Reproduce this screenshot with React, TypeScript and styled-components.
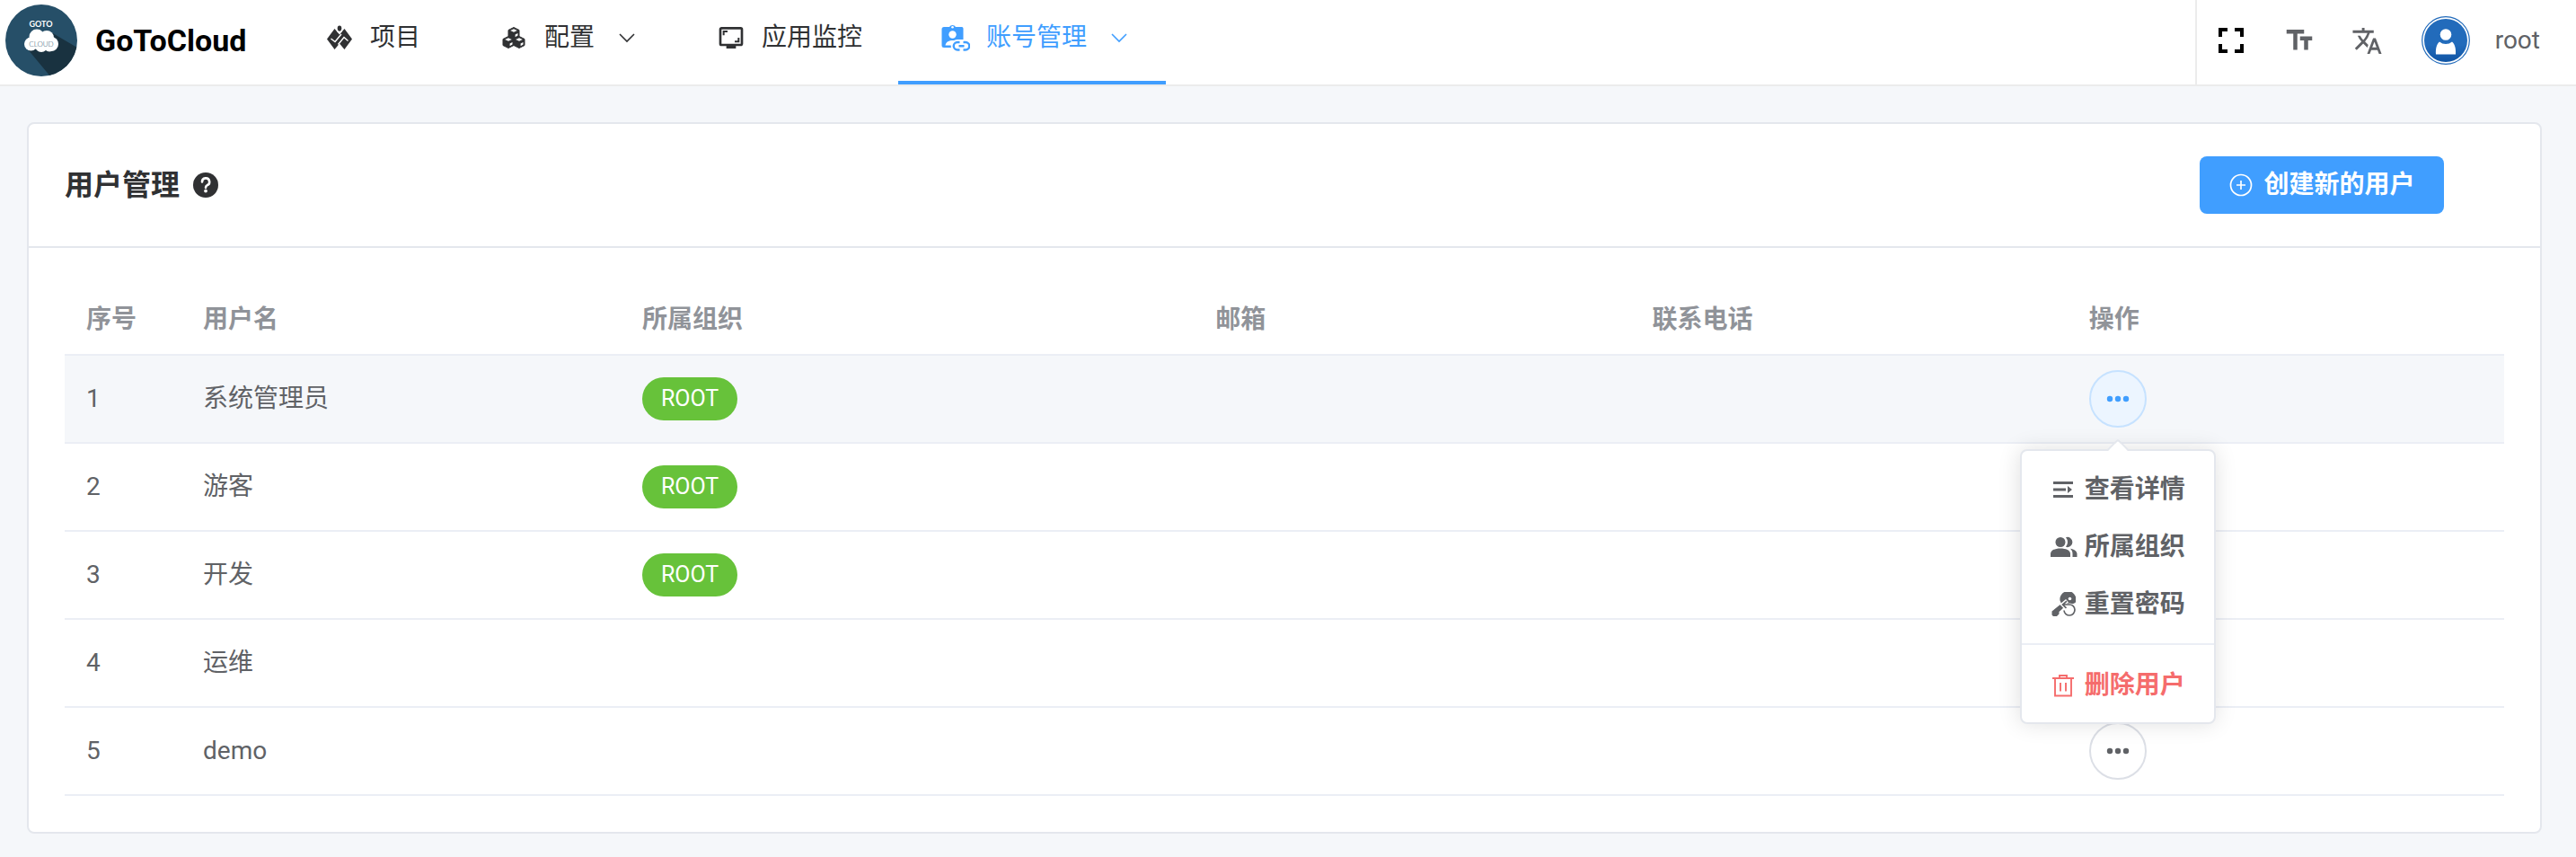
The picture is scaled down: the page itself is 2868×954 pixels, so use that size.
import React from "react";
import styled, { createGlobalStyle, css } from "styled-components";
import { MdTextFields, MdTranslate, MdScreenshotMonitor } from "react-icons/md";

const FONT = `Roboto, "Noto Sans CJK SC", sans-serif`;

const GlobalStyle = createGlobalStyle`
  *, *::before, *::after { box-sizing: border-box; }
  html { background: #f5f7fa; }
  body { margin: 0; background: #f5f7fa; color: #606266; font-family: ${FONT}; font-size: 28px; line-height: 32px; }
  button { font-family: inherit; cursor: pointer; }
`;

const Header = styled.header`
  display: flex;
  background: #fff;
  border-bottom: 2px solid #ececec;
`;

const Brand = styled.a`
  display: flex;
  align-items: center;
  gap: 20px;
  width: 314px;
  height: 94px;
  padding: 0 0 4px 6px;
  color: #000;
  text-decoration: none;
  font-size: 34px;
  font-weight: 700;
`;

const Nav = styled.nav`
  display: flex;
  flex: 1;
`;

const NavItem = styled.a<{ $active?: boolean }>`
  display: flex;
  align-items: center;
  height: 94px;
  padding: 0 40px 6px;
  border-bottom: 4px solid ${(p) => (p.$active ? "#409eff" : "transparent")};
  color: ${(p) => (p.$active ? "#409eff" : "#303133")};
  text-decoration: none;
`;

const NavIcon = styled.span`
  display: flex;
  justify-content: center;
  width: 48px;
  margin-right: 10px;
`;

const NavArrow = styled.svg`
  margin-left: 24px;
`;

const Tools = styled.div`
  display: flex;
  align-items: center;
  padding: 0 40px 4px 0;
  border-left: 2px solid #ececec;
`;

const ToolButton = styled.button<{ $dark?: boolean }>`
  display: flex;
  align-items: center;
  justify-content: center;
  width: 76px;
  height: 76px;
  padding: 0;
  border: 0;
  background: none;
  color: ${(p) => (p.$dark ? "#000" : "#606266")};
`;

const Account = styled.button`
  display: flex;
  align-items: center;
  gap: 28px;
  margin-left: 22px;
  padding: 0;
  border: 0;
  background: none;
  color: #606266;
  font-size: 28px;
  line-height: 32px;
`;

const Page = styled.main`
  padding: 40px 38px 26px 30px;
`;

const Card = styled.section`
  border: 2px solid #e4e7ed;
  border-radius: 8px;
  background: #fff;
`;

const CardHeader = styled.div`
  display: grid;
  grid-template-columns: 7fr 1fr;
  align-items: center;
  padding: 36px 40px;
  border-bottom: 2px solid #e4e7ed;
`;

const CardTitle = styled.h1`
  display: flex;
  align-items: center;
  gap: 15px;
  margin: 0;
  color: #303133;
  font-size: 32px;
  line-height: 40px;
  font-weight: 700;
`;

const PrimaryButton = styled.button`
  display: flex;
  align-items: center;
  justify-self: start;
  gap: 12px;
  height: 64px;
  padding: 0 32px;
  border: 0;
  border-radius: 8px;
  background: #409eff;
  color: #fff;
  font-size: 28px;
  font-weight: 700;
  line-height: 32px;
  white-space: nowrap;
`;

const CardBody = styled.div`
  padding: 40px;
`;

const Table = styled.table`
  width: 100%;
  table-layout: fixed;
  border-collapse: separate;
  border-spacing: 0;
`;

const IndexCol = styled.col`
  width: 130px;
`;

const NameCol = styled.col`
  width: 18%;
`;

const OrgCol = styled.col`
  width: 23.5%;
`;

const HeadCell = styled.th`
  height: 80px;
  padding: 2px 24px 0;
  border-bottom: 2px solid #ebeef5;
  color: #909399;
  text-align: left;
  font-weight: 700;
`;

const Row = styled.tr<{ $hover?: boolean }>`
  background: ${(p) => (p.$hover ? "#f5f7fa" : "#fff")};
`;

const Cell = styled.td`
  height: 98px;
  padding: 0 24px;
  border-bottom: 2px solid #ebeef5;
`;

const Tag = styled.span`
  display: inline-flex;
  align-items: center;
  height: 48px;
  padding: 0 21px;
  border-radius: 24px;
  background: #67c23a;
  color: #fff;
  font-size: 25px;
  vertical-align: middle;
`;

const ActionWrap = styled.div`
  position: relative;
  width: 64px;
`;

const MoreButton = styled.button<{ $open?: boolean }>`
  display: flex;
  align-items: center;
  justify-content: center;
  width: 64px;
  height: 64px;
  padding: 0;
  border: 2px solid #dcdfe6;
  border-radius: 50%;
  background: #fff;
  color: #606266;
  ${(p) =>
    p.$open &&
    css`
      border-color: #c6e2ff;
      background: #ecf5ff;
      color: #409eff;
    `}
`;

const Menu = styled.div`
  position: absolute;
  z-index: 10;
  top: 88px;
  left: 50%;
  transform: translateX(-50%);
  padding: 10px 0;
  border: 2px solid #e4e7ed;
  border-radius: 8px;
  background: #fff;
  box-shadow: 0 0 24px rgba(0, 0, 0, 0.12);

  &::before {
    content: "";
    position: absolute;
    top: -10px;
    left: 50%;
    width: 20px;
    height: 20px;
    margin-left: -10px;
    border: 2px solid #e4e7ed;
    border-color: #e4e7ed transparent transparent #e4e7ed;
    border-top-left-radius: 4px;
    background: linear-gradient(135deg, #fff 50%, transparent 50%);
    transform: rotate(45deg);
  }
`;

const MenuItem = styled.button<{ $danger?: boolean }>`
  display: flex;
  align-items: center;
  gap: 10px;
  height: 64px;
  padding: 2px 32px 0;
  border: 0;
  background: none;
  color: ${(p) => (p.$danger ? "#f56c6c" : "#606266")};
  font-size: 28px;
  line-height: 32px;
  font-weight: 700;
  white-space: nowrap;
`;

const MenuIcon = styled.span`
  display: flex;
  justify-content: center;
  width: 28px;

  svg {
    flex: none;
  }
`;

const Divider = styled.hr`
  margin: 12px 0;
  border: 0;
  border-top: 2px solid #ebeef5;
`;

const Logo = () => (
  <svg width="80" height="80" viewBox="0 0 80 80" aria-hidden="true">
    <defs>
      <clipPath id="logo-disc">
        <circle cx="40" cy="40" r="40" />
      </clipPath>
    </defs>
    <g clipPath="url(#logo-disc)">
      <rect width="80" height="80" fill="#264f68" />
      <path d="M51 31L80 48V80H50L25 50z" fill="#193240" />
    </g>
    <g fill="#fff">
      <circle cx="35" cy="36" r="8.500" />
      <circle cx="46" cy="37" r="8" />
      <circle cx="28.500" cy="44" r="7.500" />
      <circle cx="51" cy="44" r="8" />
      <circle cx="40" cy="46" r="7" />
      <circle cx="49" cy="46" r="6.500" />
    </g>
    <text x="39.500" y="25" fill="#fff" fontFamily="Lato, sans-serif" fontSize="9" textAnchor="middle">GOTO</text>
    <text x="40" y="47" fill="#264f68" fontFamily="Lato, sans-serif" fontWeight="300" fontSize="8" textAnchor="middle">CLOUD</text>
  </svg>
);

const ProjectIcon = () => (
  <svg width="28" height="28" viewBox="0 0 28 28" aria-hidden="true">
    <path d="M8.500 4L14 10.500L19.500 4L28 15.500L19.500 27L14 20.500L8.500 27L0 15.500z" fill="currentColor" />
    <ellipse cx="14" cy="4" rx="3.300" ry="4.600" fill="#fff" />
    <ellipse cx="14" cy="3.600" rx="2.300" ry="3.100" fill="currentColor" />
    <path d="M4.500 15L9 18.500L16 10M12.500 21.500L19 13.500L23.500 17.500" fill="none" stroke="#fff" strokeWidth="1.400" />
  </svg>
);

const Cube = ({ x, y }: { x: number; y: number }) => (
  <g transform={`translate(${x} ${y})`}>
    <path d="M0 -6.500L6 -3.500V3.500L0 6.500L-6 3.500V-3.500z" fill="currentColor" stroke="currentColor" strokeWidth="1" strokeLinejoin="round" />
    <path d="M-3.800 -3L0 -4.800L3.800 -3L0 -1.200z" fill="#fff" />
    <path d="M1.600 1.500L4.500 0V2.600L1.600 4.200z" fill="#fff" />
  </g>
);

const CubesIcon = () => (
  <svg width="26" height="26" viewBox="0 0 26 26" aria-hidden="true">
    <Cube x={13} y={8} />
    <Cube x={7} y={18} />
    <Cube x={19} y={18} />
  </svg>
);

const AccountIcon = () => (
  <svg width="32" height="32" viewBox="0 0 32 32" aria-hidden="true">
    <path d="M3 4H9A4 4 0 0 1 16 4H22A2 2 0 0 1 24.500 6V18H18A7 7 0 0 0 11 27H3A2.500 2.500 0 0 1 .500 24.500V6.500A2.500 2.500 0 0 1 3 4z" fill="currentColor" />
    <circle cx="12.500" cy="4.200" r="1.300" fill="#fff" />
    <circle cx="12.500" cy="12.500" r="4.200" fill="#fff" />
    <path d="M4.500 24.500C5 20 10 18.500 14.500 19L11.500 24.500z" fill="#fff" />
    <path d="M20.500 21H18A4 4 0 0 0 18 29.500H20.500M24.500 21H27A4 4 0 0 1 27 29.500H24.500M19.500 25.200H25.500" fill="none" stroke="currentColor" strokeWidth="2.400" />
  </svg>
);

const ChevronDown = () => (
  <NavArrow width="24" height="24" viewBox="0 0 24 24" aria-hidden="true">
    <path d="M4 8L12 16L20 8" fill="none" stroke="currentColor" strokeWidth="1.600" />
  </NavArrow>
);

const FullscreenIcon = () => (
  <svg width="28" height="28" viewBox="0 0 28 28" aria-hidden="true">
    <path d="M2 10V2H10M18 2H26V10M26 18V26H18M10 26H2V18" fill="none" stroke="currentColor" strokeWidth="4" />
  </svg>
);

const Avatar = () => (
  <svg width="54" height="54" viewBox="0 0 54 54" aria-hidden="true">
    <defs>
      <linearGradient id="avatar-fill" x1="0" y1="0" x2="0" y2="1">
        <stop offset="0.600" stopColor="#226bbb" />
        <stop offset="1" stopColor="#0f54a4" />
      </linearGradient>
    </defs>
    <circle cx="27" cy="27" r="26.300" fill="#fff" stroke="#226bbb" strokeWidth="1.200" />
    <circle cx="27" cy="27" r="24" fill="url(#avatar-fill)" />
    <circle cx="27" cy="20.500" r="6.300" fill="#fff" />
    <path d="M20 28.500A11 11 0 0 0 34 28.500C37 31 38.500 36 38 42.500H16C15.500 36 17 31 20 28.500z" fill="#fff" />
  </svg>
);

const HelpIcon = () => (
  <svg width="28" height="28" viewBox="0 0 28 28" aria-hidden="true">
    <circle cx="14" cy="14" r="14" fill="currentColor" />
    <path d="M10 10.500A4.100 4.100 0 1 1 15.500 14.300C14.400 14.900 14 15.500 14 17" fill="none" stroke="#fff" strokeWidth="2.600" strokeLinecap="round" />
    <circle cx="14" cy="20.600" r="1.900" fill="#fff" />
  </svg>
);

const PlusCircleIcon = () => (
  <svg width="28" height="28" viewBox="0 0 28 28" fill="none" stroke="currentColor" strokeWidth="1.700" aria-hidden="true">
    <circle cx="14" cy="14" r="11.500" />
    <path d="M14 9V19M9 14H19" />
  </svg>
);

const MoreIcon = () => (
  <svg width="28" height="28" viewBox="0 0 28 28" fill="currentColor" aria-hidden="true">
    <circle cx="5" cy="14" r="3.200" />
    <circle cx="14" cy="14" r="3.200" />
    <circle cx="23" cy="14" r="3.200" />
  </svg>
);

const DetailIcon = () => (
  <svg width="28" height="28" viewBox="0 0 28 28" fill="currentColor" aria-hidden="true">
    <path d="M3 5H25V8H3zM3 12.500H17V15.500H3zM3 20H25V23H3zM19 10L24 14L19 18z" />
  </svg>
);

const PeopleIcon = () => (
  <svg width="32" height="28" viewBox="0 0 32 28" fill="currentColor" aria-hidden="true">
    <circle cx="13" cy="8.500" r="5.500" />
    <path d="M2 25V21.500C2 17.500 7 15.500 13 15.500S24 17.500 24 21.500V25z" />
    <path d="M19 3.200A5.600 5.600 0 1 1 19 13.800A8 8 0 0 0 19 3.200z" />
    <path d="M24 15.800C28 16.500 31.500 18.500 31.500 21.500V25H26.500V21.500C26.500 19 25.600 17.200 24 15.800z" />
  </svg>
);

const KeyIcon = () => (
  <svg width="28" height="28" viewBox="0 0 28 28" aria-hidden="true">
    <path d="M10.500 9.500A9 9 0 1 1 27.500 12L14 18L9.500 22V24.500L7 27H3L1.500 25.500V21.500L12 13z" fill="currentColor" />
    <circle cx="21.500" cy="7.500" r="1.800" fill="#fff" />
    <circle cx="21" cy="20" r="7.600" fill="#fff" />
    <path d="M18.500 9.800L13.500 14L18 18.500" stroke="#fff" strokeWidth="4.500" fill="none" />
    <path d="M18 10.200L13.500 14L17.500 17.800M13.500 14H21A6 6 0 1 1 15 20.500" fill="none" stroke="currentColor" strokeWidth="1.700" />
  </svg>
);

const TrashIcon = () => (
  <svg width="28" height="28" viewBox="0 0 28 28" fill="none" stroke="currentColor" strokeWidth="1.900" aria-hidden="true">
    <path d="M2 6H26M10 6V3H18V6M5 6V25.500H23V6M11 11V20.500M17 11V20.500" />
  </svg>
);

const users = [
  { name: "系统管理员", org: "ROOT" },
  { name: "游客", org: "ROOT" },
  { name: "开发", org: "ROOT" },
  { name: "运维", org: "" },
  { name: "demo", org: "" },
];

const columns = ["序号", "用户名", "所属组织", "邮箱", "联系电话", "操作"];

const ActionMenu = () => (
  <Menu role="menu">
    <MenuItem role="menuitem">
      <MenuIcon><DetailIcon /></MenuIcon>查看详情
    </MenuItem>
    <MenuItem role="menuitem">
      <MenuIcon><PeopleIcon /></MenuIcon>所属组织
    </MenuItem>
    <MenuItem role="menuitem">
      <MenuIcon><KeyIcon /></MenuIcon>重置密码
    </MenuItem>
    <Divider />
    <MenuItem role="menuitem" $danger>
      <MenuIcon><TrashIcon /></MenuIcon>删除用户
    </MenuItem>
  </Menu>
);

export default function App() {
  return (
    <>
      <GlobalStyle />
      <Header>
        <Brand href="#">
          <Logo />
          GoToCloud
        </Brand>
        <Nav>
          <NavItem href="#project">
            <NavIcon><ProjectIcon /></NavIcon>项目
          </NavItem>
          <NavItem href="#config">
            <NavIcon><CubesIcon /></NavIcon>配置<ChevronDown />
          </NavItem>
          <NavItem href="#monitor">
            <NavIcon><MdScreenshotMonitor size={32} /></NavIcon>应用监控
          </NavItem>
          <NavItem href="#account" $active>
            <NavIcon><AccountIcon /></NavIcon>账号管理<ChevronDown />
          </NavItem>
        </Nav>
        <Tools>
          <ToolButton $dark aria-label="全屏"><FullscreenIcon /></ToolButton>
          <ToolButton aria-label="字号"><MdTextFields size={36} /></ToolButton>
          <ToolButton aria-label="语言"><MdTranslate size={35} /></ToolButton>
          <Account>
            <Avatar />
            root
          </Account>
        </Tools>
      </Header>
      <Page>
        <Card>
          <CardHeader>
            <CardTitle>用户管理<HelpIcon /></CardTitle>
            <PrimaryButton>
              <PlusCircleIcon />创建新的用户
            </PrimaryButton>
          </CardHeader>
          <CardBody>
            <Table>
              <colgroup>
                <IndexCol />
                <NameCol />
                <OrgCol />
                <col />
                <col />
                <col />
              </colgroup>
              <thead>
                <tr>
                  {columns.map((c) => (
                    <HeadCell key={c} scope="col">{c}</HeadCell>
                  ))}
                </tr>
              </thead>
              <tbody>
                {users.map((u, i) => (
                  <Row key={u.name} $hover={i === 0}>
                    <Cell>{i + 1}</Cell>
                    <Cell>{u.name}</Cell>
                    <Cell>{u.org && <Tag>{u.org}</Tag>}</Cell>
                    <Cell />
                    <Cell />
                    <Cell>
                      <ActionWrap>
                        <MoreButton $open={i === 0} aria-label="操作"><MoreIcon /></MoreButton>
                        {i === 0 && <ActionMenu />}
                      </ActionWrap>
                    </Cell>
                  </Row>
                ))}
              </tbody>
            </Table>
          </CardBody>
        </Card>
      </Page>
    </>
  );
}
